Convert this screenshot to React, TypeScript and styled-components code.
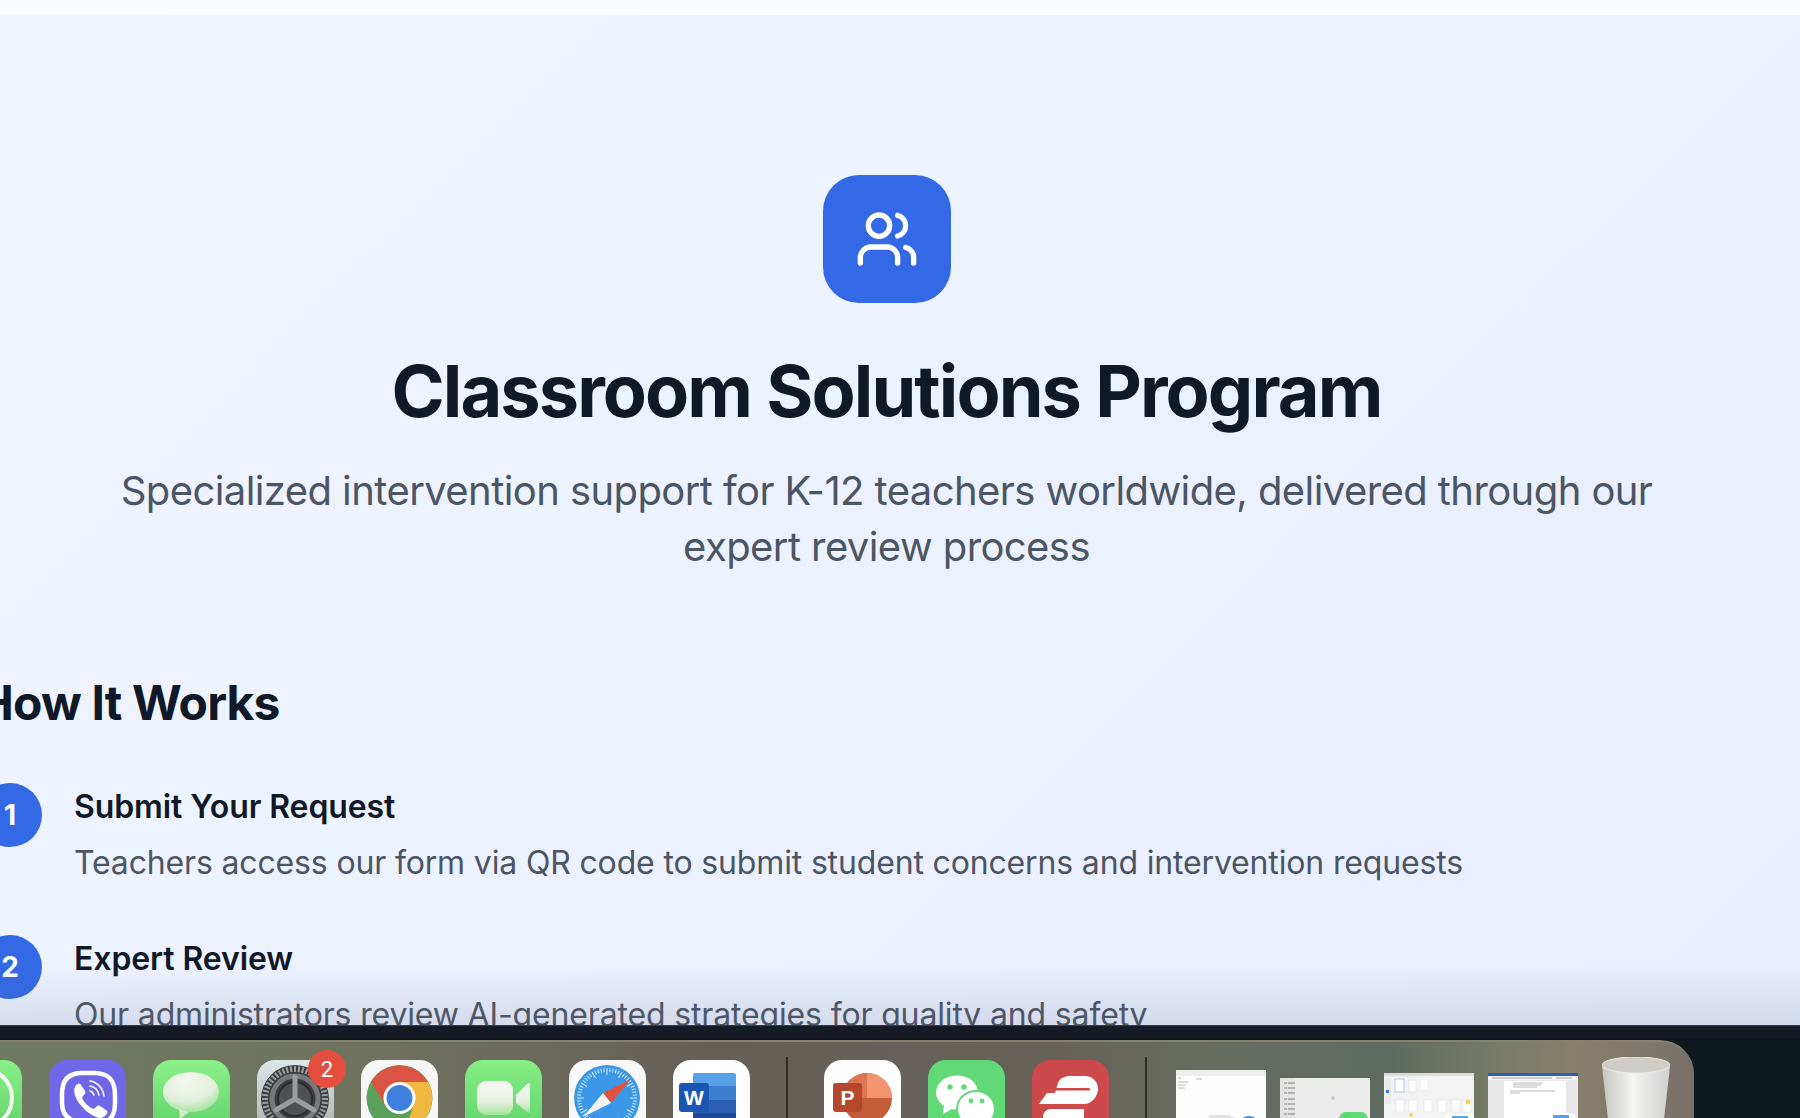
import React from "react";
import styled, { createGlobalStyle } from "styled-components";
import { Users } from "lucide-react";

const GlobalStyle = createGlobalStyle`
  html, body {
    margin: 0;
    padding: 0;
    height: 100%;
    overflow: hidden;
    font-family: "Inter", "Liberation Sans", sans-serif;
  }
`;

const steps = [
  {
    n: 1,
    title: "Submit Your Request",
    text: "Teachers access our form via QR code to submit student concerns and intervention requests",
  },
  {
    n: 2,
    title: "Expert Review",
    text: "Our administrators review AI-generated strategies for quality and safety",
  },
];

const ViberIcon = () => (
  <svg viewBox="0 0 77 77" width="77" height="77">
    <path
      d="M33 13h12c15 0 21 7 21 22v8c0 15-7 21-20 21h-5l-9 9v-10c-12-2-19-8-19-20v-9c0-14 7-21 20-21z"
      fill="none"
      stroke="#fff"
      strokeWidth="4.5"
    />
    <path
      d="M27 25c2-2 4-2 5 0l4 6c1 2 0 3-2 5-1 1-1 2 0 4 2 3 5 6 8 8 2 1 3 1 4 0 2-2 3-3 5-2l6 4c2 1 2 3 0 5-3 3-6 4-10 2-7-3-14-9-19-17-3-6-4-11-1-15z"
      fill="#fff"
    />
    <path
      d="M41 21c7 1 13 7 14 15M41 26c5 1 8 4 9 9M41 31c2 0 3 2 4 4"
      fill="none"
      stroke="#fff"
      strokeWidth="1.5"
      strokeLinecap="round"
    />
  </svg>
);

const MessagesIcon = () => (
  <svg viewBox="0 0 77 77" width="77" height="77">
    <defs>
      <radialGradient id="bubble" cx="42%" cy="25%" r="75%">
        <stop offset="0" stopColor="#f5f8f1" />
        <stop offset="0.65" stopColor="#e3efdc" />
        <stop offset="1" stopColor="#a8e4a0" />
      </radialGradient>
    </defs>
    <ellipse cx="38" cy="32" rx="28" ry="20" fill="url(#bubble)" />
    <path d="M26 49l1 10 9-7z" fill="#cdebc6" />
  </svg>
);

const SettingsIcon = () => {
  const teeth = Array.from({ length: 48 }, (_, i) => i * 7.5);
  return (
    <svg viewBox="0 0 77 77" width="77" height="77">
      <circle cx="38" cy="39" r="34" fill="#3c3d3f" />
      {teeth.map((a) => (
        <rect key={a} x="37" y="6" width="2" height="6" fill="#9b9fa1" transform={`rotate(${a} 38 39)`} />
      ))}
      <circle cx="38" cy="39" r="23" fill="none" stroke="#77797b" strokeWidth="5" />
      <circle cx="38" cy="39" r="17" fill="#505153" stroke="#2b2c2e" strokeWidth="2" />
      <path d="M38 39V17M38 39l19 11M38 39L19 50" stroke="#9a9c9e" strokeWidth="5" strokeLinecap="round" />
    </svg>
  );
};

const ChromeIcon = () => (
  <svg viewBox="0 0 77 77" width="77" height="77">
    <circle cx="38.5" cy="38" r="33" fill="#5aa05a" />
    <path d="M10 22A33 33 0 0 1 67 22H38.5L24.6 46z" fill="#db5443" />
    <path d="M67 22A33 33 0 0 1 44 70.5L52.4 46 38.5 22z" fill="#f1b83f" />
    <circle cx="38.5" cy="38" r="16" fill="#fff" />
    <circle cx="38.5" cy="38" r="13" fill="#3f7fdd" />
  </svg>
);

const FaceTimeIcon = () => (
  <svg viewBox="0 0 77 77" width="77" height="77">
    <defs>
      <linearGradient id="cam" x1="0" y1="0" x2="0" y2="1">
        <stop offset="0" stopColor="#f6f8f3" />
        <stop offset="0.6" stopColor="#e6f1e1" />
        <stop offset="1" stopColor="#a4e29c" />
      </linearGradient>
    </defs>
    <rect x="12" y="21" width="36" height="34" rx="9" fill="url(#cam)" />
    <path d="M51 35l11-11c2-1 3-1 3 1v26c0 2-1 3-3 1L51 43z" fill="url(#cam)" />
  </svg>
);

const SafariIcon = () => {
  const ticks = Array.from({ length: 60 }, (_, i) => i * 6);
  return (
    <svg viewBox="0 0 77 77" width="77" height="77">
      <circle cx="38" cy="38" r="33" fill="#3b97e8" />
      {ticks.map((a) => (
        <rect key={a} x="37.5" y="8" width="1" height={a % 30 === 0 ? 7 : 4} fill="#d6ebfb" transform={`rotate(${a} 38 38)`} />
      ))}
      <path d="M62 19L34 33l8 10z" fill="#e2523f" />
      <path d="M14 57L34 33l8 10z" fill="#f2f2f2" />
    </svg>
  );
};

const WordIcon = () => (
  <svg viewBox="0 0 77 77" width="77" height="77">
    <rect x="20" y="13" width="43" height="15" rx="2" fill="#57a1e8" />
    <rect x="20" y="26" width="43" height="14" fill="#3d7fcf" />
    <rect x="20" y="40" width="43" height="13" fill="#2b5fb5" />
    <rect x="20" y="53" width="43" height="24" fill="#1e4793" />
    <rect x="6" y="23" width="30" height="29" rx="3" fill="#1c56b4" />
    <text x="21" y="45" textAnchor="middle" fontSize="21" fontWeight="700" fill="#fff" fontFamily="Liberation Sans, sans-serif">W</text>
  </svg>
);

const PowerPointIcon = () => (
  <svg viewBox="0 0 77 77" width="77" height="77">
    <circle cx="43" cy="38" r="25" fill="#c55c3a" />
    <path d="M43 13a25 25 0 0 1 25 25H43z" fill="#f2946f" />
    <path d="M43 13a25 25 0 0 0-25 25h25z" fill="#de7552" />
    <rect x="9" y="23" width="29" height="29" rx="3" fill="#b5472a" />
    <text x="23.5" y="45" textAnchor="middle" fontSize="21" fontWeight="700" fill="#fff" fontFamily="Liberation Sans, sans-serif">P</text>
  </svg>
);

const WeChatIcon = () => (
  <svg viewBox="0 0 77 77" width="77" height="77">
    <ellipse cx="29" cy="32.5" rx="21" ry="17" fill="#fff" />
    <path d="M16 45l-1 9 9-5z" fill="#fff" />
    <ellipse cx="48" cy="49" rx="20" ry="19" fill="#62d977" />
    <ellipse cx="48" cy="49" rx="18" ry="17" fill="#fff" />
    <circle cx="22" cy="27" r="2.7" fill="#62d977" />
    <circle cx="36" cy="27" r="2.7" fill="#62d977" />
    <circle cx="43" cy="41" r="2.4" fill="#62d977" />
    <circle cx="54" cy="41" r="2.4" fill="#62d977" />
  </svg>
);

const ExpressIcon = () => (
  <svg viewBox="0 0 77 77" width="77" height="77">
    <path d="M26 23c2-5 7-7 12-7h15c8 0 13 6 13 13s-6 15-14 15H7l8-11h8z" fill="#fff" />
    <rect x="23" y="28" width="35" height="2.6" rx="1.3" fill="#cc4a4b" />
    <path d="M19 49h33v28H19c-5 0-8-4-8-8v-12c0-4 3-8 8-8z" fill="#fff" />
  </svg>
);

const TrashIcon = () => (
  <svg viewBox="0 0 68 62" width="68" height="62">
    <defs>
      <linearGradient id="bin" x1="0" y1="0" x2="1" y2="0">
        <stop offset="0" stopColor="#c4c4c1" />
        <stop offset="0.45" stopColor="#f4f4f2" />
        <stop offset="1" stopColor="#cfcfcd" />
      </linearGradient>
    </defs>
    <path d="M0 10l6 52h56l6-52z" fill="url(#bin)" />
    <ellipse cx="34" cy="8" rx="34" ry="8" fill="#cecdc8" stroke="#ecebe8" strokeWidth="1" />
  </svg>
);

const NotesThumb = () => (
  <svg viewBox="0 0 90 50" width="90" height="50">
    <rect width="90" height="50" fill="#fefefe" />
    <rect width="90" height="6" fill="#eeeeec" />
    <path d="M2 8h3M2 12h10M2 15h8M2 18h7M20 9h6" stroke="#b9b9b9" strokeWidth="1" />
    <path d="M33 46h22M33 48h26" stroke="#c9c9c9" strokeWidth="1" />
    <rect x="59" y="43" width="31" height="10" rx="8" fill="#fff" />
    <circle cx="73" cy="58" r="12" fill="#3f94e4" />
  </svg>
);

const MessagesThumb = () => (
  <svg viewBox="0 0 90 41" width="90" height="41">
    <rect width="90" height="41" fill="#ececec" />
    <rect width="15" height="41" fill="#e3e3e3" />
    {[5, 10, 15, 21, 26, 31, 36].map((y) => (
      <path key={y} d={`M4 ${y}h3M8 ${y}h7`} stroke="#a3a3a3" strokeWidth="1.4" />
    ))}
    <circle cx="53" cy="20" r="2" fill="#c9c9c9" />
    <rect x="59" y="34" width="29" height="14" rx="7" fill="#62d977" />
  </svg>
);

const PagesThumb = () => (
  <svg viewBox="0 0 90 46" width="90" height="46">
    <rect width="90" height="46" fill="#f3f3f3" />
    <rect width="90" height="3" fill="#dcdcdc" />
    <rect x="1" y="5" width="6" height="26" fill="#ebebeb" />
    <rect x="2" y="17" width="3" height="3" fill="#3d7fcf" />
    <rect x="11" y="6" width="9" height="13" fill="#fff" stroke="#9db8e6" strokeWidth="0.8" />
    <rect x="25" y="7" width="7" height="12" fill="#fdfdfd" stroke="#d5d5d5" strokeWidth="0.5" />
    <rect x="37" y="7" width="6" height="9" fill="#fdfdfd" />
    {[12, 25, 40, 54, 68, 79].map((x) => (
      <rect key={x} x={x} y="27" width="8" height="12" fill="#fdfdfd" stroke="#dedede" strokeWidth="0.4" />
    ))}
    <circle cx="84" cy="29" r="2.5" fill="#f3d25f" />
    <circle cx="27" cy="42" r="2" fill="#f3d25f" />
    <rect x="62" y="41" width="28" height="8" rx="7" fill="#fff" />
    <rect x="68" y="43" width="16" height="6" fill="#5aa2e8" />
  </svg>
);

const WordThumb = () => (
  <svg viewBox="0 0 90 46" width="90" height="46">
    <rect width="90" height="46" fill="#e8e8e8" />
    <rect width="90" height="3" fill="#2f5db0" />
    <rect y="3" width="90" height="4" fill="#f4f4f4" />
    <path d="M4 5h60M68 5h16" stroke="#9aa5b5" strokeWidth="1" />
    <rect x="16" y="8" width="62" height="38" fill="#fff" />
    <path d="M25 10h30M25 12h28M25 14h24M22 18h45M22 20h10" stroke="#9b9b9b" strokeWidth="0.7" />
    <rect x="60" y="40" width="28" height="8" rx="7" fill="#fff" />
    <rect x="65" y="42" width="16" height="6" fill="#5aa2e8" />
  </svg>
);

const App: React.FC = () => {
  return (
    <Screen>
      <GlobalStyle />
      <TopStrip />
      <Main>
        <Content>
          <Hero>
            <IconTile>
              <Users size={64} color="#fff" strokeWidth={2} />
            </IconTile>
            <Title>Classroom Solutions Program</Title>
            <Subtitle>
              Specialized intervention support for K-12 teachers worldwide,
              delivered through our expert review process
            </Subtitle>
          </Hero>
          <SectionTitle>How It Works</SectionTitle>
          <StepList>
            {steps.map((s) => (
              <Step key={s.n}>
                <StepNumber>{s.n}</StepNumber>
                <StepBody>
                  <StepTitle>{s.title}</StepTitle>
                  <StepText>{s.text}</StepText>
                </StepBody>
              </Step>
            ))}
          </StepList>
        </Content>
        <DockShadow />
      </Main>
      <BlackStrip />
      <Wallpaper>
        <Dock>
          <AppIcon $bg="linear-gradient(#8af089,#5fd069)">
            <svg viewBox="0 0 77 77" width="77" height="77">
              <circle cx="38" cy="38" r="29" fill="none" stroke="#f2f7f0" strokeWidth="4" />
            </svg>
          </AppIcon>
          <AppIcon $bg="#6f66e8"><ViberIcon /></AppIcon>
          <AppIcon $bg="linear-gradient(#8df18a,#5cce67)"><MessagesIcon /></AppIcon>
          <AppIcon $bg="linear-gradient(#dfe6e8,#a8adb0)">
            <SettingsIcon />
            <Badge>2</Badge>
          </AppIcon>
          <AppIcon $bg="#f7f6f4"><ChromeIcon /></AppIcon>
          <AppIcon $bg="linear-gradient(#86ee84,#5fd16a)"><FaceTimeIcon /></AppIcon>
          <AppIcon $bg="#f8f8f8"><SafariIcon /></AppIcon>
          <AppIcon $bg="#fff"><WordIcon /></AppIcon>
          <Divider />
          <AppIcon $bg="#fff"><PowerPointIcon /></AppIcon>
          <AppIcon $bg="#62d977"><WeChatIcon /></AppIcon>
          <AppIcon $bg="#cc4a4b"><ExpressIcon /></AppIcon>
          <Divider />
          <Thumbs>
            <Thumb $top={10}><NotesThumb /></Thumb>
            <Thumb $top={18}><MessagesThumb /></Thumb>
            <Thumb $top={13}><PagesThumb /></Thumb>
            <Thumb $top={13}><WordThumb /></Thumb>
          </Thumbs>
          <TrashSlot><TrashIcon /></TrashSlot>
        </Dock>
      </Wallpaper>
    </Screen>
  );
};

export default App;

const Screen = styled.div`
  width: 1800px;
  height: 1118px;
  display: flex;
  flex-direction: column;
  overflow: hidden;
`;

const TopStrip = styled.div`
  height: 15px;
  flex: none;
  background: #fafbfc;
`;

const Main = styled.main`
  position: relative;
  height: 1011px;
  flex: none;
  overflow: hidden;
  background: linear-gradient(135deg, #f0f5ff 0%, #e9eeff 100%);
  border-bottom: 1px solid #3b2f78;
  box-sizing: border-box;
`;

const Content = styled.div`
  width: 1817px;
  margin-left: -22px;
  padding-top: 160px;
`;

const Hero = styled.header`
  display: flex;
  flex-direction: column;
  align-items: center;
  text-align: center;
`;

const IconTile = styled.div`
  width: 128px;
  height: 128px;
  border-radius: 36px;
  background: #3369e5;
  display: flex;
  align-items: center;
  justify-content: center;
`;

const Title = styled.h1`
  margin: 48px 0 0;
  font-size: 72px;
  line-height: 80px;
  font-weight: 700;
  letter-spacing: -1.9px;
  color: #111827;
`;

const Subtitle = styled.p`
  margin: 32px 0 0;
  max-width: 1600px;
  font-size: 40px;
  line-height: 56px;
  font-weight: 400;
  letter-spacing: -0.58px;
  color: #4b5563;
`;

const SectionTitle = styled.h2`
  margin: 100px 0 0;
  font-size: 48px;
  line-height: 56px;
  font-weight: 700;
  letter-spacing: -0.85px;
  color: #111827;
`;

const StepList = styled.div`
  margin-top: 52px;
  display: flex;
  flex-direction: column;
  gap: 52px;
`;

const Step = styled.div`
  display: flex;
  gap: 32px;
`;

const StepNumber = styled.div`
  width: 64px;
  height: 64px;
  flex: none;
  border-radius: 50%;
  background: #3369e5;
  color: #fff;
  display: flex;
  align-items: center;
  justify-content: center;
  font-size: 28px;
  font-weight: 700;
`;

const StepBody = styled.div`
  padding-top: 4px;
`;

const StepTitle = styled.div`
  font-size: 32px;
  line-height: 40px;
  font-weight: 600;
  letter-spacing: -0.1px;
  color: #111827;
`;

const StepText = styled.div`
  margin-top: 16px;
  font-size: 32px;
  line-height: 40px;
  letter-spacing: -0.155px;
  color: #4b5563;
`;

const DockShadow = styled.div`
  position: absolute;
  left: 0;
  right: 0;
  bottom: 0;
  height: 60px;
  background: linear-gradient(rgba(90, 100, 130, 0), rgba(90, 100, 130, 0.16));
  pointer-events: none;
`;

const BlackStrip = styled.div`
  height: 13px;
  flex: none;
  background: #161a24;
`;

const Wallpaper = styled.div`
  flex: 1;
  background: #0f181c;
  padding-top: 1px;
  overflow: hidden;
`;

const Dock = styled.div`
  width: 1694px;
  height: 120px;
  box-sizing: border-box;
  padding: 18px 0 0;
  border-radius: 0 34px 0 0;
  background: linear-gradient(
    90deg,
    #6f7a62 0%,
    #70745f 20%,
    #655f58 42%,
    #66625a 62%,
    #666c60 72%,
    #5f6b60 82%,
    #7a7c68 89%,
    #87806c 93%,
    #78716a 100%
  );
  border-top: 2px solid #848270;
  display: flex;
  align-items: flex-start;
  gap: 27px;
`;

const AppIcon = styled.div<{ $bg: string }>`
  position: relative;
  width: 77px;
  height: 77px;
  flex: none;
  border-radius: 18px;
  background: ${({ $bg }) => $bg};

  &:first-child {
    margin-left: -55px;
  }
`;

const Badge = styled.span`
  position: absolute;
  top: -10px;
  left: 51px;
  width: 38px;
  height: 38px;
  border-radius: 50%;
  background: #e54d3f;
  color: #fff;
  font-family: "Roboto", sans-serif;
  font-size: 22px;
  display: flex;
  align-items: center;
  justify-content: center;
`;

const Divider = styled.div`
  width: 2px;
  height: 80px;
  margin: -3px 9px 0;
  flex: none;
  background: #2d2b27;
`;

const Thumbs = styled.div`
  display: flex;
  gap: 14px;
  margin-left: -7px;
`;

const Thumb = styled.div<{ $top: number }>`
  width: 90px;
  margin-top: ${({ $top }) => $top}px;
  filter: blur(0.5px);
  line-height: 0;
`;

const TrashSlot = styled.div`
  width: 68px;
  margin: -3px 0 0 -3px;
  flex: none;
`;
